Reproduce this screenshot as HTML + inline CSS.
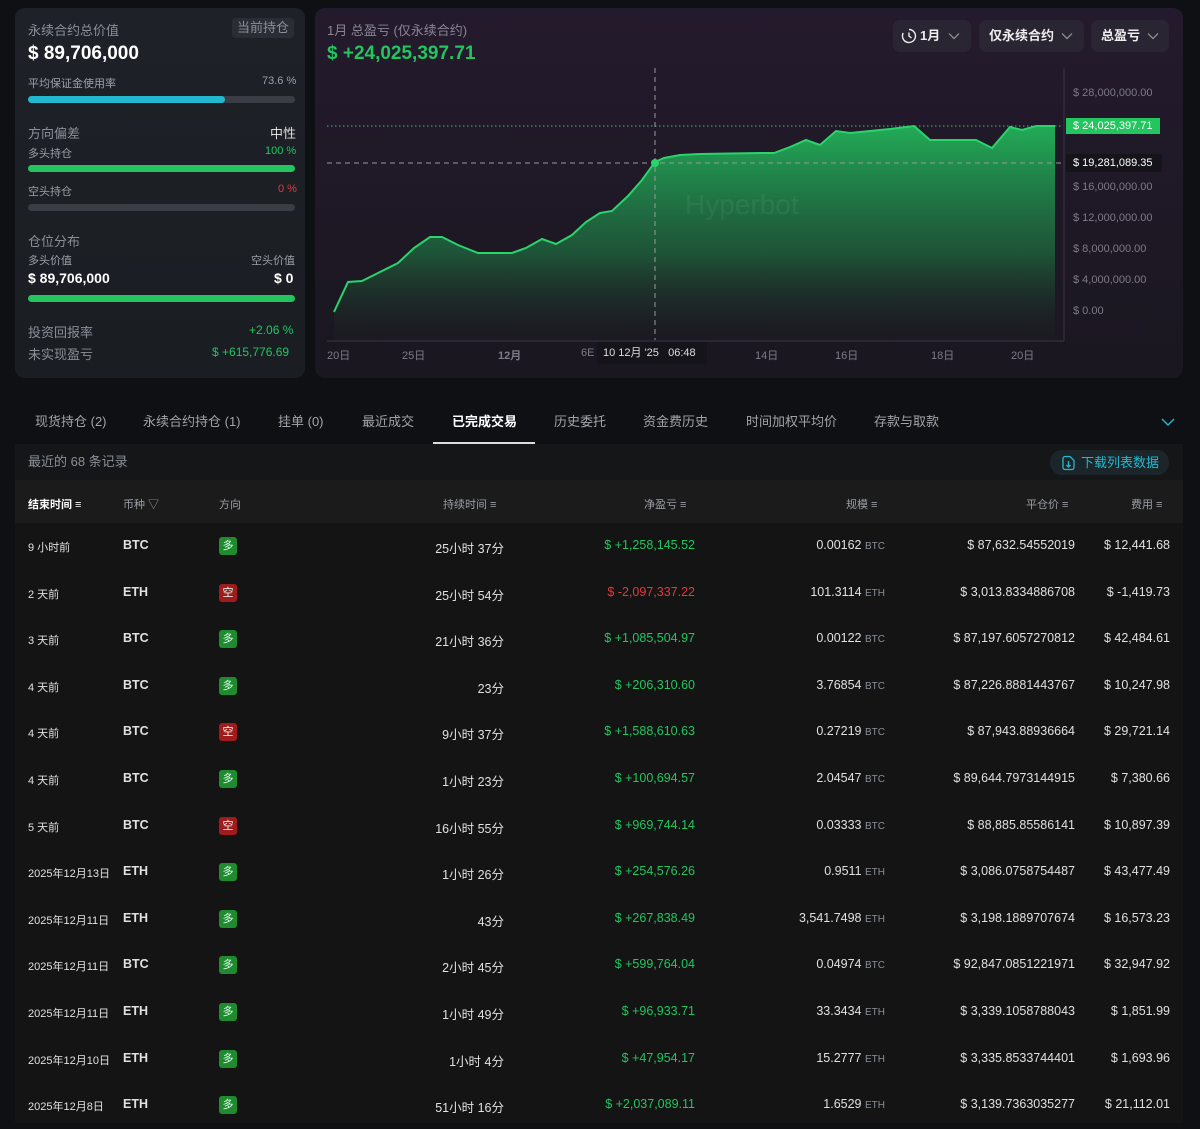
<!DOCTYPE html>
<html><head><meta charset="utf-8"><style>
*{margin:0;padding:0;box-sizing:border-box}
body{width:1200px;height:1123px;background:#0e1013;font-family:"Liberation Sans","Noto Sans CJK SC",sans-serif;color:#e8e8e8;position:relative;overflow:hidden}
.abs{position:absolute}
.card{position:absolute;border-radius:10px}
.lbl{color:#8a8f98;font-size:13px}
.sm{color:#9aa0a8;font-size:11px}
.bar{position:absolute;left:28px;width:267px;height:7px;border-radius:4px;background:#3a3d44}
.g{color:#22c55e}.r{color:#e03a3a}
.tab{position:absolute;top:411px;font-size:13px;color:#a0a4aa}
.row{position:absolute;left:15px;width:1168px;height:47px;font-size:12.5px;color:#e0e0e0}
.row span{position:absolute;top:15px;white-space:nowrap}
.badge{position:absolute;top:14px;left:204px;width:18px;height:18px;border-radius:3px;font-size:11px;text-align:center;line-height:18px;color:#dfe}
.u{color:#8a8f98;font-size:10px}
.hd{position:absolute;top:496px;font-size:11px;color:#9a9ea4}
.btn{position:absolute;top:20px;height:32px;border-radius:7px;background:#2a2532;font-size:13px;font-weight:bold;color:#eee;line-height:32px;padding-left:10px}
.btn svg{position:absolute;top:12px}
.yl{position:absolute;left:1073px;font-size:11px;color:#7d7a86}
.xl{position:absolute;top:347px;font-size:11px;color:#7d7a86}
</style></head><body>
<div class="card" style="left:15px;top:8px;width:290px;height:370px;background:linear-gradient(180deg,#1e2228,#1a1d22)"></div>
<div class="abs lbl" style="left:28px;top:20px">永续合约总价值</div>
<div class="abs" style="left:232px;top:18px;width:62px;height:20px;background:#2a2d33;border-radius:4px;color:#8a8f98;font-size:13px;text-align:center;line-height:20px">当前持仓</div>
<div class="abs" style="left:28px;top:43px;font-size:19px;font-weight:bold;color:#fff">$ 89,706,000</div>
<div class="abs sm" style="left:28px;top:75px">平均保证金使用率</div>
<div class="abs sm" style="left:262px;top:75px">73.6 %</div>
<div class="bar" style="top:96px"></div><div class="bar" style="top:96px;width:197px;background:#22b8cf"></div>
<div class="abs lbl" style="left:28px;top:123px">方向偏差</div>
<div class="abs" style="left:270px;top:123px;font-size:13px;color:#ddd">中性</div>
<div class="abs sm" style="left:28px;top:145px">多头持仓</div>
<div class="abs sm g" style="left:265px;top:145px">100 %</div>
<div class="bar" style="top:165px;background:#22c55e"></div>
<div class="abs sm" style="left:28px;top:183px">空头持仓</div>
<div class="abs sm r" style="left:278px;top:183px">0 %</div>
<div class="bar" style="top:204px"></div>
<div class="abs lbl" style="left:28px;top:231px">仓位分布</div>
<div class="abs sm" style="left:28px;top:252px">多头价值</div>
<div class="abs sm" style="left:251px;top:252px">空头价值</div>
<div class="abs" style="left:28px;top:270px;font-size:14px;font-weight:bold;color:#fff">$ 89,706,000</div>
<div class="abs" style="left:274px;top:270px;font-size:14px;font-weight:bold;color:#fff">$ 0</div>
<div class="bar" style="top:295px;background:#22c55e"></div>
<div class="abs lbl" style="left:28px;top:322px">投资回报率</div>
<div class="abs g" style="left:249px;top:323px;font-size:12px">+2.06 %</div>
<div class="abs lbl" style="left:28px;top:344px">未实现盈亏</div>
<div class="abs g" style="left:212px;top:345px;font-size:12px">$ +615,776.69</div>

<div class="card" style="left:315px;top:8px;width:868px;height:370px;background:linear-gradient(180deg,#241a2d,#1a1720)"></div>
<div class="abs" style="left:327px;top:20px;font-size:13px;color:#8a8696">1月 总盈亏 (仅永续合约)</div>
<div class="abs g" style="left:327px;top:43px;font-size:19px;font-weight:bold">$ +24,025,397.71</div>
<div class="btn" style="left:893px;width:78px;padding-left:27px"><svg style="left:8px;top:8px" width="16" height="16" viewBox="0 0 16 16" fill="none" stroke="#eee" stroke-width="1.4"><path d="M8 1.5A6.5 6.5 0 1 1 2.2 5"/><path d="M8 4.5V8l2.5 2"/></svg>1月<svg style="left:55px" width="12" height="8" viewBox="0 0 12 8" fill="none" stroke="#999" stroke-width="1.2"><path d="M1 1.5l5 5 5-5"/></svg></div>
<div class="btn" style="left:979px;width:105px">仅永续合约<svg style="left:82px" width="12" height="8" viewBox="0 0 12 8" fill="none" stroke="#999" stroke-width="1.2"><path d="M1 1.5l5 5 5-5"/></svg></div>
<div class="btn" style="left:1091px;width:78px">总盈亏<svg style="left:56px" width="12" height="8" viewBox="0 0 12 8" fill="none" stroke="#999" stroke-width="1.2"><path d="M1 1.5l5 5 5-5"/></svg></div>
<svg class="abs" style="left:0;top:0" width="1200" height="380">
<defs><linearGradient id="gf" x1="0" y1="0" x2="0" y2="1"><stop offset="0" stop-color="#22b35a" stop-opacity=".95"/><stop offset=".6" stop-color="#1f7a45" stop-opacity=".6"/><stop offset="1" stop-color="#1d2a22" stop-opacity=".1"/></linearGradient></defs>
<path d="M334,312 L348,282 L362,281 L380,272 L398,263 L414,248 L430,237 L442,237 L458,245 L478,253 L512,253 L526,248 L542,239 L556,244 L572,235 L586,222 L600,213 L612,211 L628,196 L642,180 L655,162 L664,158 L680,155 L700,154 L760,153 L774,153 L790,147 L806,140 L820,145 L836,131 L850,133 L890,129 L914,126 L930,140 L976,140 L992,148 L1010,127 L1022,130 L1036,126 L1055,126 L1055,340 L334,340 Z" fill="url(#gf)"/>
<path d="M334,312 L348,282 L362,281 L380,272 L398,263 L414,248 L430,237 L442,237 L458,245 L478,253 L512,253 L526,248 L542,239 L556,244 L572,235 L586,222 L600,213 L612,211 L628,196 L642,180 L655,162 L664,158 L680,155 L700,154 L760,153 L774,153 L790,147 L806,140 L820,145 L836,131 L850,133 L890,129 L914,126 L930,140 L976,140 L992,148 L1010,127 L1022,130 L1036,126 L1055,126" fill="none" stroke="#2bd36b" stroke-width="2"/>
<line x1="327" y1="126" x2="1063" y2="126" stroke="#3fbf6a" stroke-dasharray="1.5 2.5"/>
<line x1="327" y1="163" x2="1063" y2="163" stroke="#999" stroke-dasharray="5 4"/>
<line x1="655" y1="68" x2="655" y2="340" stroke="#999" stroke-dasharray="5 4"/>
<circle cx="655" cy="163" r="4" fill="#2bd36b"/>
<line x1="1064" y1="68" x2="1064" y2="341" stroke="#3a3442"/>
<line x1="327" y1="341" x2="1064" y2="341" stroke="#3a3442"/>
<text x="685" y="214" font-size="28" fill="#ffffff" fill-opacity=".06" font-family="Liberation Sans">Hyperbot</text>
</svg>
<div class="yl" style="top:87px">$ 28,000,000.00</div>
<div class="abs" style="left:1066px;top:118px;width:94px;height:16px;background:#22c55e;color:#fff;font-size:11px;line-height:16px;padding-left:7px">$ 24,025,397.71</div>
<div class="abs" style="left:1066px;top:154px;width:96px;height:18px;background:#16141b;color:#fff;font-size:11px;line-height:18px;padding-left:7px">$ 19,281,089.35</div>
<div class="yl" style="top:181px">$ 16,000,000.00</div>
<div class="yl" style="top:212px">$ 12,000,000.00</div>
<div class="yl" style="top:243px">$ 8,000,000.00</div>
<div class="yl" style="top:274px">$ 4,000,000.00</div>
<div class="yl" style="top:305px">$ 0.00</div>
<div class="xl" style="left:327px">20日</div><div class="xl" style="left:402px">25日</div><div class="xl" style="left:498px;font-weight:bold">12月</div><div class="xl" style="left:581px">6E</div>
<div class="abs" style="left:597px;top:342px;width:110px;height:22px;background:#16141b;color:#ddd;font-size:11px;line-height:22px;padding-left:6px">10 12月 '25 &nbsp; 06:48</div>
<div class="xl" style="left:755px">14日</div><div class="xl" style="left:835px">16日</div><div class="xl" style="left:931px">18日</div><div class="xl" style="left:1011px">20日</div>

<div class="tab" style="left:35px">现货持仓 (2)</div>
<div class="tab" style="left:143px">永续合约持仓 (1)</div>
<div class="tab" style="left:278px">挂单 (0)</div>
<div class="tab" style="left:362px">最近成交</div>
<div class="tab" style="left:452px;color:#fff;font-weight:bold">已完成交易</div>
<div class="abs" style="left:433px;top:442px;width:102px;height:2px;background:#ddd"></div>
<div class="tab" style="left:554px">历史委托</div>
<div class="tab" style="left:643px">资金费历史</div>
<div class="tab" style="left:746px">时间加权平均价</div>
<div class="tab" style="left:874px">存款与取款</div>
<svg class="abs" style="left:1161px;top:418px" width="14" height="8" viewBox="0 0 14 8" fill="none" stroke="#22b8cf" stroke-width="1.4"><path d="M1 1l6 6 6-6"/></svg>

<div class="abs" style="left:15px;top:444px;width:1168px;height:36px;background:#151618"></div>
<div class="abs lbl" style="left:28px;top:451px">最近的 68 条记录</div>
<div class="abs" style="left:1050px;top:450px;width:119px;height:25px;border-radius:12px;background:#1c2529;color:#22b8cf;font-size:13px;line-height:25px;padding-left:31px"><svg class="abs" style="left:11px;top:5px" width="15" height="16" viewBox="0 0 15 16" fill="none" stroke="#22b8cf" stroke-width="1.3"><path d="M4 1.5h5l4 4v7a2 2 0 0 1-2 2H4a2 2 0 0 1-2-2v-9a2 2 0 0 1 2-2z"/><path d="M7.5 6v6M5.5 10l2 2 2-2"/></svg>下载列表数据</div>
<div class="abs" style="left:15px;top:480px;width:1168px;height:43px;background:#1b1b1c"></div>
<div class="hd" style="left:28px;color:#fff;font-weight:bold">结束时间 ≡</div>
<div class="hd" style="left:123px">币种 ▽</div>
<div class="hd" style="left:219px">方向</div>
<div class="hd" style="left:443px">持续时间 ≡</div>
<div class="hd" style="left:644px">净盈亏 ≡</div>
<div class="hd" style="left:846px">规模 ≡</div>
<div class="hd" style="left:1026px">平仓价 ≡</div>
<div class="hd" style="left:1131px">费用 ≡</div>
<div class="abs" style="left:15px;top:523px;width:1168px;height:600px;background:#141414"></div>
<div id="rows"></div>
<script>
var d=[["9 小时前","BTC",1,"25小时 37分","$ +1,258,145.52","0.00162","BTC","$ 87,632.54552019","$ 12,441.68"],
["2 天前","ETH",0,"25小时 54分","$ -2,097,337.22","101.3114","ETH","$ 3,013.8334886708","$ -1,419.73"],
["3 天前","BTC",1,"21小时 36分","$ +1,085,504.97","0.00122","BTC","$ 87,197.6057270812","$ 42,484.61"],
["4 天前","BTC",1,"23分","$ +206,310.60","3.76854","BTC","$ 87,226.8881443767","$ 10,247.98"],
["4 天前","BTC",0,"9小时 37分","$ +1,588,610.63","0.27219","BTC","$ 87,943.88936664","$ 29,721.14"],
["4 天前","BTC",1,"1小时 23分","$ +100,694.57","2.04547","BTC","$ 89,644.7973144915","$ 7,380.66"],
["5 天前","BTC",0,"16小时 55分","$ +969,744.14","0.03333","BTC","$ 88,885.85586141","$ 10,897.39"],
["2025年12月13日","ETH",1,"1小时 26分","$ +254,576.26","0.9511","ETH","$ 3,086.0758754487","$ 43,477.49"],
["2025年12月11日","ETH",1,"43分","$ +267,838.49","3,541.7498","ETH","$ 3,198.1889707674","$ 16,573.23"],
["2025年12月11日","BTC",1,"2小时 45分","$ +599,764.04","0.04974","BTC","$ 92,847.0851221971","$ 32,947.92"],
["2025年12月11日","ETH",1,"1小时 49分","$ +96,933.71","33.3434","ETH","$ 3,339.1058788043","$ 1,851.99"],
["2025年12月10日","ETH",1,"1小时 4分","$ +47,954.17","15.2777","ETH","$ 3,335.8533744401","$ 1,693.96"],
["2025年12月8日","ETH",1,"51小时 16分","$ +2,037,089.11","1.6529","ETH","$ 3,139.7363035277","$ 21,112.01"]];
var h="";d.forEach(function(r,i){var t=523+i*46.6;
h+='<div class="row" style="top:'+t+'px"><span style="left:13px;font-size:11px;top:16px">'+r[0]+'</span><span style="left:108px;font-weight:bold">'+r[1]+'</span>'+
'<div class="badge" style="background:'+(r[2]?'#1f8a2e':'#a01c1c')+'">'+(r[2]?'多':'空')+'</div>'+
'<span style="right:679px">'+r[3]+'</span><span class="'+(i!=1?'g':'r')+'" style="right:488px">'+r[4]+'</span>'+
'<span style="right:298px">'+r[5]+' <b class="u" style="font-weight:normal">'+r[6]+'</b></span><span style="right:108px">'+r[7]+'</span><span style="right:13px">'+r[8]+'</span></div>';});
document.getElementById("rows").innerHTML=h;
</script>
</body></html>
